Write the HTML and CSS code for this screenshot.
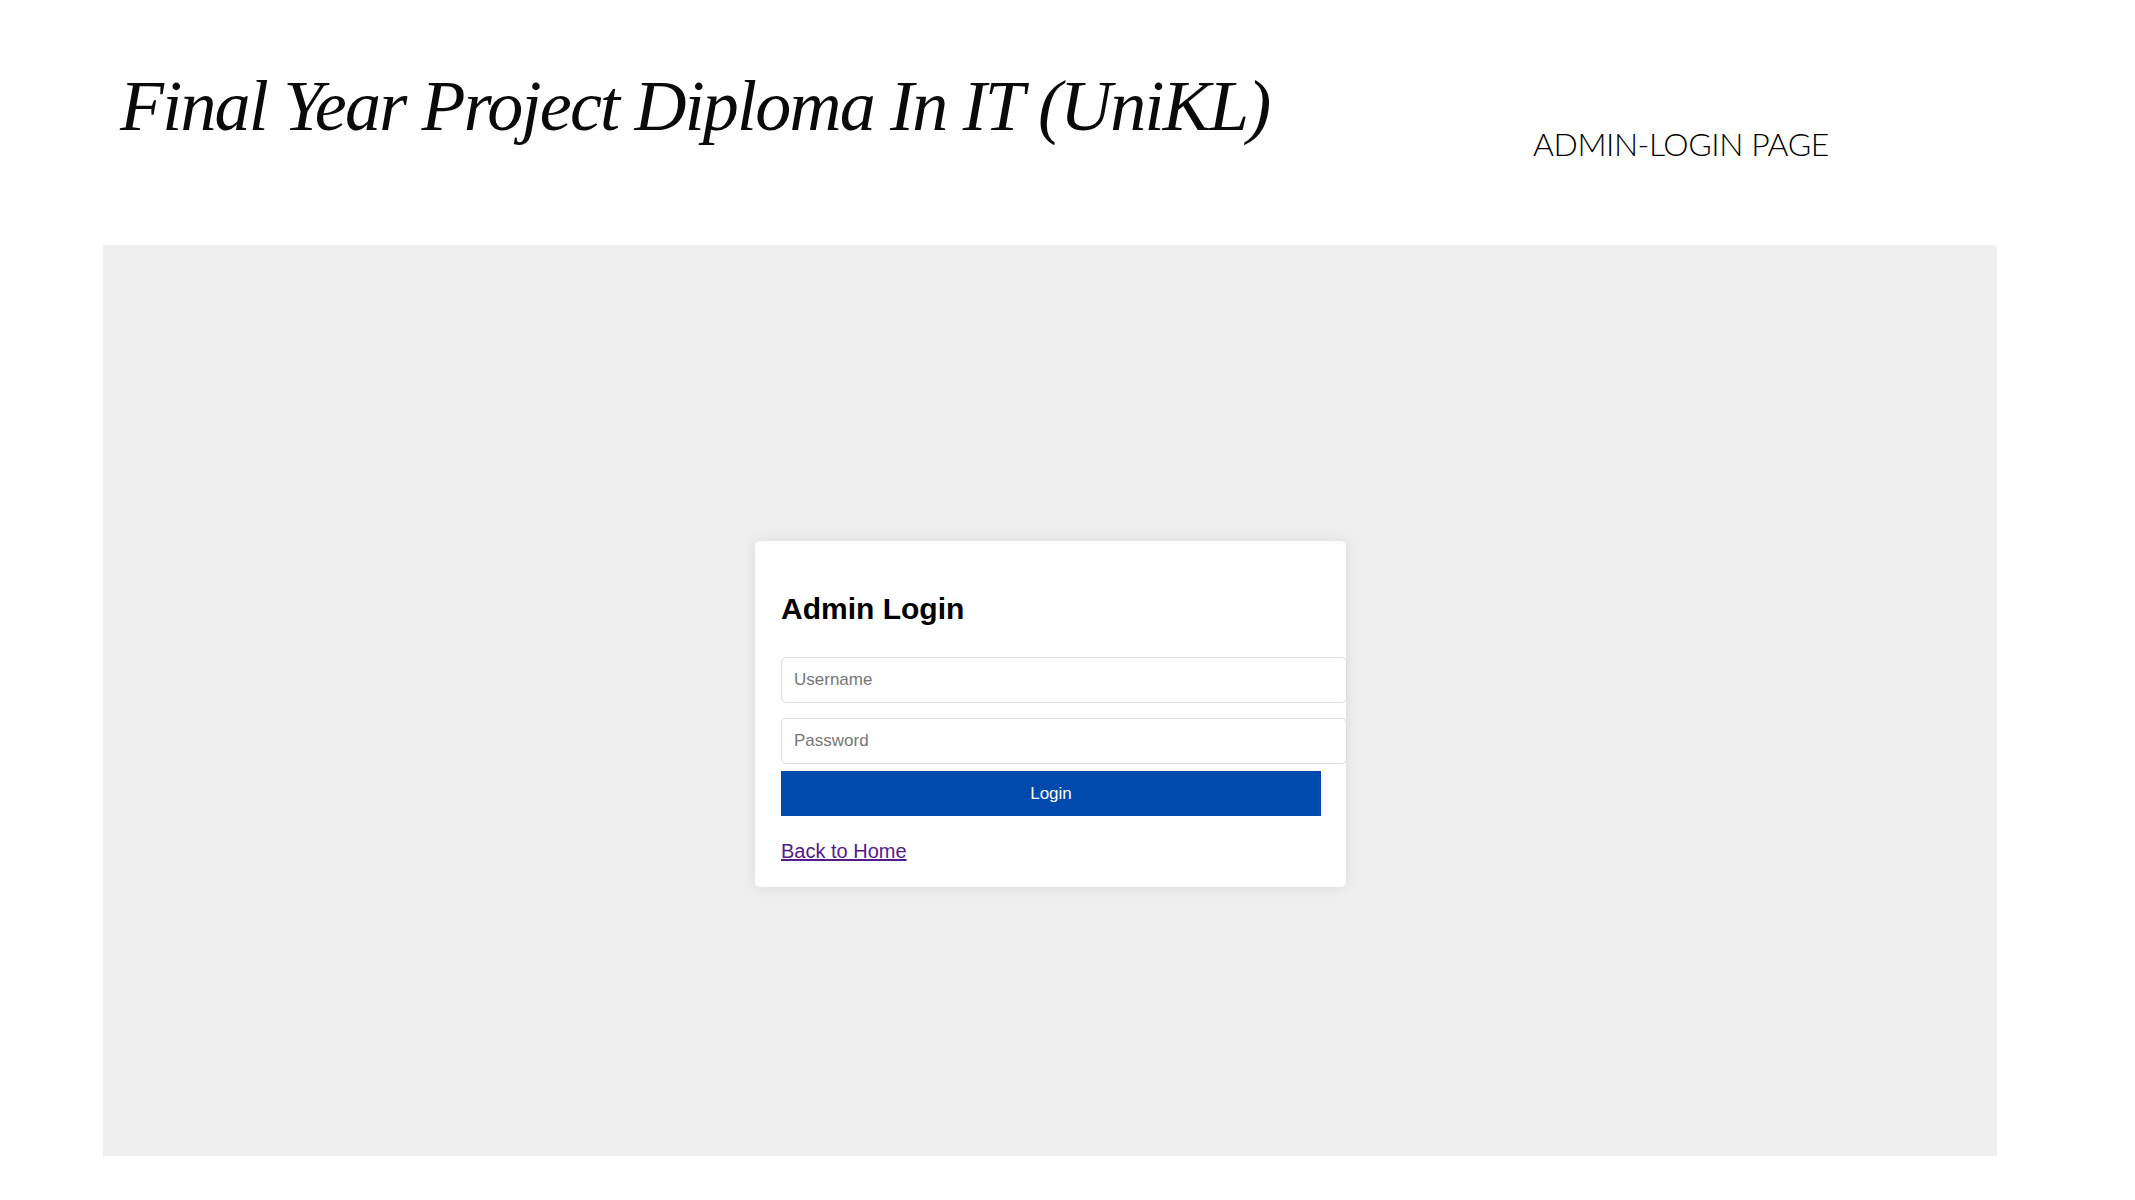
FILE: index.html
```html
<!DOCTYPE html>
<html lang="en">
<head>
<meta charset="utf-8">
<title>Admin Login</title>
<link rel="stylesheet" href="styles.css">
</head>
<body>
<header class="header">
  <h1 class="title">Final Year Project Diploma In IT (UniKL)</h1>
  <div class="subtitle">ADMIN-LOGIN PAGE</div>
</header>
<main class="panel">
  <div class="card">
    <h2 class="card-title">Admin Login</h2>
    <form class="login-form" onsubmit="return false;">
      <input class="field field-user" type="text" placeholder="Username">
      <input class="field field-pass" type="password" placeholder="Password">
      <button class="login-btn" type="submit">Login</button>
    </form>
    <p class="back"><a class="back-link" href="#">Back to Home</a></p>
  </div>
</main>
</body>
</html>
```

FILE: styles.css
```css
html, body {
  margin: 0;
  padding: 0;
  background: #ffffff;
}

.header {
  box-sizing: border-box;
  height: 245px;
  padding: 66px 0 0 120px;
  display: grid;
  grid-template-columns: 1413px 1fr;
  align-items: start;
}

.title {
  margin: 0;
  font-family: "Liberation Serif", "Times New Roman", serif;
  font-style: italic;
  font-weight: 400;
  font-size: 72px;
  line-height: 80px;
  letter-spacing: -1.8px;
  color: #0a0a0a;
  white-space: nowrap;
}

.subtitle {
  margin-top: 59px;
  font-family: "Lato", "DejaVu Sans", sans-serif;
  font-weight: 300;
  font-size: 32px;
  line-height: 38px;
  letter-spacing: -0.45px;
  color: #000000;
  white-space: nowrap;
}

.panel {
  box-sizing: border-box;
  margin: 0 138px 0 103px;
  height: 911px;
  background: #efefef;
  display: flex;
  justify-content: center;
  align-items: flex-start;
  padding: 296px 0 0 1px;
}

.card {
  width: 540px;
  padding: 26px 25px 24px 26px;
  background: #ffffff;
  border-radius: 5px;
  box-shadow: 0 0 14px rgba(0, 0, 0, 0.09);
  font-family: "Liberation Sans", Arial, sans-serif;
}

.card-title {
  margin: 25px 0 31px;
  font-size: 30px;
  line-height: 34px;
  font-weight: 700;
  color: #000000;
}

.login-form {
  display: flex;
  flex-direction: column;
  align-items: flex-start;
  margin: 0;
}

.field {
  display: block;
  box-sizing: content-box;
  width: 100%;
  height: 20px;
  padding: 12px;
  margin: 0;
  border: 1px solid #dcdcdc;
  border-radius: 5px;
  background: #ffffff;
  font-family: "Liberation Sans", Arial, sans-serif;
  font-size: 17px;
  line-height: 20px;
  color: #222222;
  outline: none;
}

.field::placeholder {
  color: #767676;
}

.field-user {
  margin-bottom: 15px;
}

.field-pass {
  margin-bottom: 7px;
}

.login-btn {
  display: block;
  width: 100%;
  height: 45px;
  margin: 0;
  padding: 0;
  border: none;
  background: #004aad;
  color: #ffffff;
  font-family: "Liberation Sans", Arial, sans-serif;
  font-size: 17px;
  cursor: pointer;
}

.back {
  margin: 24px 0 0;
  font-size: 20px;
  line-height: 23px;
}

.back-link {
  color: #551a8b;
  text-decoration: underline;
}
```
